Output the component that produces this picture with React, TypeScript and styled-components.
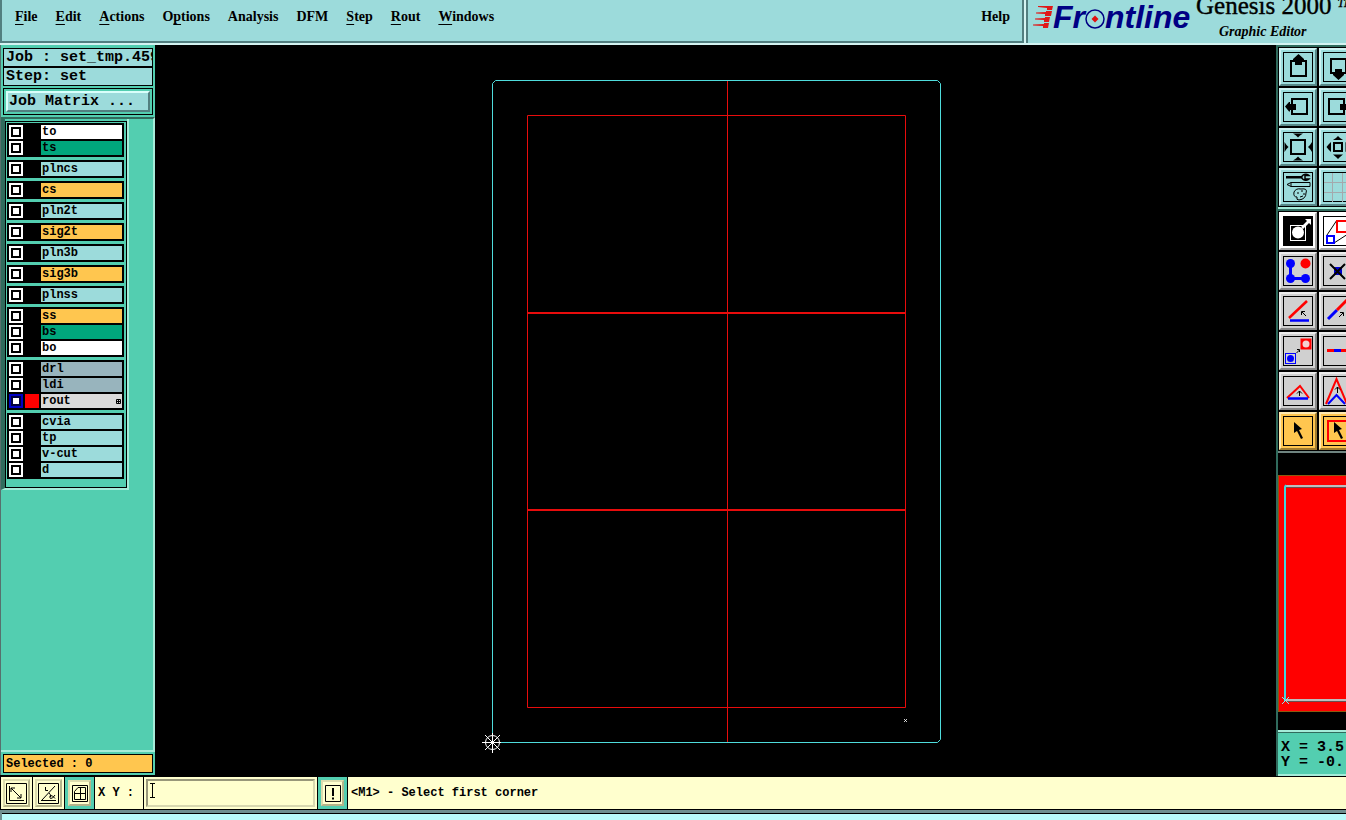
import React from "react";
import styled, { createGlobalStyle } from "styled-components";

const c = {
  aqua: "#9cdbdb",
  aquaLight: "#d4f4f2",
  aquaDark: "#527f80",
  green: "#53ceb0",
  greenLight: "#a5ecd9",
  greenDark: "#306b5d",
  orange: "#ffc64f",
  cream: "#ffffce",
  creamDark: "#98977a",
};
const mono = `"Liberation Mono", "DejaVu Sans Mono", monospace`;
const serif = `"Liberation Serif", "Times New Roman", serif`;

const GlobalStyle = createGlobalStyle`
  * { box-sizing: border-box; }
  body { margin: 0; background: #000; color: #000; overflow: hidden; }
  button, input { font: inherit; color: inherit; margin: 0; }
`;

const Shell = styled.div`
  display: flex;
  flex-direction: column;
  height: 100vh;
  min-height: 640px;
  font: bold 12px/16px ${mono};
`;

/* ---------- top bar ---------- */
const TopBar = styled.header`
  display: flex;
  flex: none;
  height: 45px;
  background: ${c.aqua};
  border-bottom: 2px solid ${c.aquaLight};
`;
const MenuBar = styled.nav`
  display: flex;
  flex: 1;
  gap: 18px;
  align-items: flex-start;
  padding: 9px 12px 0 13px;
  border: solid ${c.aquaDark};
  border-width: 0 2px 2px;
  font: bold 14px/16px ${serif};
`;
const MenuButton = styled.button<{ $end?: boolean }>`
  padding: 0;
  border: 0;
  background: none;
  margin-left: ${(p) => (p.$end ? "auto" : "0")};
`;
const Mnemonic = styled.span`
  text-decoration: underline;
  text-decoration-thickness: 1px;
  text-underline-offset: 3px;
`;
const Brand = styled.div`
  display: flex;
  flex: none;
  width: 322px;
  padding-left: 7px;
  border-left: 2px solid ${c.aquaLight};
  box-shadow: inset 2px 0 0 ${c.aquaDark};
  overflow: hidden;
`;
const Logo = styled.div`
  display: flex;
  align-items: center;
  flex: none;
  width: 163px;
  height: 34px;
  color: #000084;
  font: italic bold 32px/34px "Liberation Sans", Arial, sans-serif;
`;
const Product = styled.div`
  width: 160px;
  flex: none;
`;
const ProductName = styled.div`
  margin-bottom: 12px;
  font: 25px/11px ${serif};
  -webkit-text-stroke: 0.4px #000;
  white-space: nowrap;
`;
const Trade = styled.span`
  margin-left: 6px;
  vertical-align: 7px;
  font: italic 12px/2px ${serif};
`;
const ProductSub = styled.div`
  padding-left: 23px;
  font: italic bold 14px/17px ${serif};
`;

/* ---------- main ---------- */
const Main = styled.main`
  display: flex;
  flex: 1;
  min-height: 0;
`;
const Side = styled.aside`
  display: flex;
  flex-direction: column;
  flex: none;
  width: 155px;
  margin-bottom: 1px;
  background: ${c.green};
  border-left: 1px solid #57706d;
`;
const JobBlock = styled.div`
  padding: 3px 2px 2px;
`;
const JobLine = styled.div`
  height: 19px;
  padding-left: 2px;
  border: 1px solid #000;
  background: ${c.aqua};
  font: bold 15px/18px ${mono};
  white-space: pre;
  overflow: hidden;
`;
const MatrixFrame = styled.div`
  display: flex;
  margin-top: 2px;
  padding: 2px;
  border: 1px solid #000;
`;
const MatrixButton = styled.button`
  flex: 1;
  height: 21px;
  padding: 0 1px;
  border: 2px solid;
  border-color: #d9fffb #527f80 #527f80 #d9fffb;
  background: ${c.aqua};
  font: bold 15px/18px ${mono};
  text-align: left;
`;
const LayerPane = styled.div`
  flex: 1;
  min-height: 0;
  border: solid ${c.greenLight};
  border-width: 2px 2px 2px 0;
  border-top-color: ${c.greenDark};
`;
const LayerWell = styled.div`
  width: 128px;
  padding-top: 2px;
  border: solid ${c.greenLight};
  border-width: 0 2px 2px 4px;
  border-left-color: ${c.greenDark};
`;
const LayerList = styled.div`
  display: flex;
  flex-direction: column;
  gap: 3px;
  padding: 1px 2px 8px 1px;
  border: 1px solid #000;
`;
const LayerGroup = styled.div`
  display: flex;
  flex-direction: column;
  gap: 2px;
  padding: 2px;
  background: #000;
`;
const LayerRow = styled.label`
  display: flex;
  gap: 2px;
  height: 14px;
`;
const LayerCheck = styled.input`
  appearance: none;
  flex: none;
  width: 14px;
  height: 14px;
  border: 2px solid #fff;
  background: #fff;
  box-shadow: inset 0 0 0 2px #000;
  &:checked {
    border-color: #0000c4;
    box-shadow: inset 0 0 0 2px #00003c;
  }
`;
const Swatch = styled.span<{ $on?: boolean }>`
  flex: none;
  width: 14px;
  background: ${(p) => (p.$on ? "#f00" : "#000")};
`;
const LayerName = styled.span<{ $bg: string }>`
  display: flex;
  align-items: center;
  justify-content: space-between;
  flex: 1;
  padding: 0 1px;
  background: ${(p) => p.$bg};
  font: bold 12px/14px ${mono};
`;
const SelectedBox = styled.div`
  height: 19px;
  margin: 2px;
  padding-left: 2px;
  border: 1px solid #000;
  background: ${c.orange};
  font: bold 12px/18px ${mono};
`;
const Canvas = styled.section`
  display: flex;
  flex: 1;
  min-width: 0;
  background: #000;
`;
const Drawing = styled.svg`
  flex: 1;
  min-width: 0;
  height: 100%;
`;

/* ---------- tools ---------- */
const Tools = styled.aside`
  display: flex;
  flex-direction: column;
  flex: none;
  width: 70px;
  background: #000;
  border-left: 2px solid ${c.greenDark};
  overflow: hidden;
`;
const ToolGrid = styled.div<{ $edge: string }>`
  display: grid;
  grid-template-columns: 38px 38px;
  gap: 2px;
  flex: none;
  width: 80px;
  padding: 1px;
  border: solid ${(p) => p.$edge};
  border-width: 2px 0;
  border-top-color: ${c.greenDark};
`;
type Tone = "aqua" | "gray" | "white" | "orange";
const tones: Record<Tone, [string, string, string]> = {
  aqua: [c.aqua, "#cff3f3", "#588888"],
  gray: ["#d0d0d0", "#ececec", "#878787"],
  white: ["#ffffff", "#ffffff", "#a8a8a8"],
  orange: [c.orange, "#ffe9b0", "#a07c30"],
};
const ToolButton = styled.button<{ $tone: Tone }>`
  width: 38px;
  height: 38px;
  padding: 0;
  border: 2px solid;
  border-color: ${(p) => {
    const [, hi, lo] = tones[p.$tone];
    return `${hi} ${lo} ${lo} ${hi}`;
  }};
  background: ${(p) => tones[p.$tone][0]};
  svg { display: block; }
`;
const MiniMap = styled.div`
  display: flex;
  align-items: center;
  flex: 1;
  min-height: 0;
  padding-top: 3px;
`;
const Coords = styled.div`
  flex: none;
  height: 46px;
  padding: 8px 0 0 3px;
  border: solid ${c.greenLight};
  border-width: 2px 0;
  background: ${c.green};
  box-shadow: inset 0 1px 0 ${c.greenDark};
  font: bold 15px/15px ${mono};
  white-space: pre;
`;

/* ---------- bottom bar ---------- */
const BottomBar = styled.footer`
  display: flex;
  flex: none;
  height: 34px;
  background: ${c.cream};
  border: solid #000;
  border-width: 1px 0 1px 1px;
`;
const ModeCell = styled.div<{ $on?: boolean }>`
  display: flex;
  flex: none;
  width: ${(p) => (p.$on ? "30px" : "32px")};
  padding: ${(p) => (p.$on ? "3px" : "2px")};
  background: ${(p) => (p.$on ? c.green : c.cream)};
  border-right: 1px solid #000;
`;
const ModeButton = styled.button`
  display: flex;
  align-items: center;
  justify-content: center;
  flex: 1;
  padding: 0;
  border: 2px solid;
  border-color: #dcdcae #b4b48a #b4b48a #dcdcae;
  background: ${c.cream};
  svg { flex: none; }
`;
const XYLabel = styled.label`
  flex: none;
  width: 49px;
  padding-left: 3px;
  border-right: 1px solid #000;
  font: bold 12px/33px ${mono};
  white-space: pre;
`;
const XYField = styled.div`
  display: flex;
  align-items: center;
  flex: none;
  width: 174px;
  padding: 2px;
  border-right: 1px solid #000;
`;
const XYInput = styled.input`
  width: 100%;
  height: 28px;
  padding: 0 3px;
  border: 2px solid;
  border-color: ${c.creamDark} #d8d8b0 #d8d8b0 ${c.creamDark};
  background: ${c.cream};
  outline: none;
`;
const Message = styled.output`
  padding-left: 3px;
  font: bold 12px/33px ${mono};
`;
const Caret = styled.svg`
  position: absolute;
  left: 4px;
  top: 4px;
  pointer-events: none;
`;
const InputWrap = styled.div`
  position: relative;
  display: flex;
  flex: 1;
`;
const Strip = styled.div`
  flex: none;
  height: 10px;
  border-top: 3px solid #6f8f90;
  border-left: 2px solid #6f8f90;
  background: #b9fbfb;
  box-shadow: inset 0 1px 0 #000;
`;

const menus: [string, string, string][] = [
  ["", "F", "ile"],
  ["", "E", "dit"],
  ["", "A", "ctions"],
  ["O", "p", "tions"],
  ["Analysis", "", ""],
  ["DFM", "", ""],
  ["", "S", "tep"],
  ["", "R", "out"],
  ["", "W", "indows"],
];

const WHITE = "#ffffff";
const MASK = "#00a67c";
const SLATE = "#98b4bd";
const layers: [string, string][][] = [
  [["to", WHITE], ["ts", MASK]],
  [["plncs", c.aqua]],
  [["cs", c.orange]],
  [["pln2t", c.aqua]],
  [["sig2t", c.orange]],
  [["pln3b", c.aqua]],
  [["sig3b", c.orange]],
  [["plnss", c.aqua]],
  [["ss", c.orange], ["bs", MASK], ["bo", WHITE]],
  [["drl", SLATE], ["ldi", SLATE], ["rout", "#dadada"]],
  [["cvia", c.aqua], ["tp", c.aqua], ["v-cut", c.aqua], ["d", c.aqua]],
];

const cursor = "M15 10 L23 17 L20 18 L24 26 L22 27 L18 19 L15 21 Z";
const box = { fill: "none", stroke: "#000", strokeWidth: 2 };

const viewTools: [string, React.ReactNode][] = [
  ["Pan up", <><rect x="12" y="13" width="15" height="15" {...box} /><path d="M19.5 6 L25 11 V12 H23 V17 H16 V12 H14 V11Z" /></>],
  ["Pan down", <><rect x="12" y="11" width="15" height="14" {...box} /><path d="M16 21 H23 V25 H25 V27 L19.5 32 L14 27 V25 H16Z" /></>],
  ["Pan left", <><rect x="13" y="11" width="15" height="15" {...box} /><path d="M6 18.5 L10 14 H11 V16 H17 V22 H11 V23.5 H10Z" /></>],
  ["Pan right", <><rect x="10" y="11" width="15" height="15" {...box} /><path d="M32 18.5 L28 14 H27 V16 H21 V22 H27 V23.5 H28Z" /></>],
  ["Zoom in", <><rect x="12" y="12" width="14" height="14" {...box} /><path d="M14 5.5 H24 L21 7.500 L19 9.500 L17 7.500Z M14 32.500 H24 L21 30.500 L19 28.500 L17 30.500Z M5.500 14 L7.500 17 L9.500 19 L7.500 21 L5.500 24Z M33 14 L31 17 L29 19 L31 21 L33 24Z" /></>],
  ["Zoom out", <><rect x="15" y="15" width="8" height="8" {...box} /><path d="M19 8 L21 10 L24 12 H14 L17 10Z M19 31 L21 29 L24 26.500 H14 L17 29Z M7.500 19 L9.500 16.500 L12 14 V24 L9.500 21.500Z M31 19 L29 16.500 L26.500 14 V24 L29 21.500Z" /></>],
  ["Setup", <>
    <path d="M7 8 H23 V10.5 H7Z" />
    <path d="M30 7.5 A4 3 0 1 0 30 11 H26 V7.5Z" fill="none" stroke="#000" strokeWidth="1.5" />
    <path d="M8 16.5 L12 14.5 H31 V18.5 H12Z M12 14.5 V18.5" fill="none" stroke="#000" />
    <path d="M15 24 Q17 20 22 21 Q29 20 27 25 Q27 31 20 32 Q17 32 18 29 Q14 29 15 24Z" fill="none" stroke="#000" />
    <path d="M18 25 h2 m2 -2 h2 m0 3 h2 m-5 3 l3 -1" stroke="#000" />
  </>],
  ["Grid", <path d="M13.5 5 V34 M23.5 5 V34 M5 14.5 H34 M5 24.5 H34" stroke="#a3a9ad" fill="none" />],
];

const editTools: [string, Tone, React.ReactNode][] = [
  ["Change feature", "white", <>
    <rect x="4" y="4" width="30" height="30" />
    <rect x="11.5" y="13.5" width="15" height="15" fill="none" stroke="#fff" />
    <circle cx="19" cy="20.5" r="6" fill="#fff" />
    <path d="M22 15 L28 9 L26 7 H32 V13 L30 11 L24 17Z" fill="#fff" />
  </>],
  ["Copy to layer", "white", <>
    <path d="M8 23 L18 8 M15 31 L29 22" stroke="#000" fill="none" />
    <rect x="8" y="24" width="7" height="7" fill="none" stroke="#00f" strokeWidth="2" />
    <rect x="18" y="9" width="13" height="11" fill="#fff" stroke="#f00" strokeWidth="2" />
  </>],
  ["Connect points", "gray", <>
    <path d="M11.5 11 V26.5 H27" stroke="#00f" strokeWidth="3" fill="none" />
    <g fill="#00f"><circle cx="11.5" cy="11.5" r="4.5" /><circle cx="11.5" cy="26.5" r="4.5" /><circle cx="26.5" cy="26.5" r="4.5" /></g>
    <circle cx="26.5" cy="11.5" r="5" fill="#f00" />
  </>],
  ["Delete", "gray", <><rect x="15" y="15" width="8" height="8" fill="#0000d0" /><path d="M11 12 L26 27 M26 12 L11 27" stroke="#000" strokeWidth="2" /></>],
  ["Change angle", "gray", <>
    <path d="M10 26 L28 9" stroke="#f00" strokeWidth="2.5" /><path d="M11 28.5 H30" stroke="#00f" strokeWidth="2.5" />
    <path d="M27 24 L23 20 M22.5 23 V19.5 H26" stroke="#000" fill="none" />
  </>],
  ["Extend line", "gray", <>
    <path d="M9 27 L18 18" stroke="#00f" strokeWidth="3" /><path d="M18 18 L28 8" stroke="#f00" strokeWidth="3" />
    <path d="M20 25 L24 21 M21 20.5 H24.5 V24" stroke="#000" fill="none" />
  </>],
  ["Move feature", "gray", <>
    <rect x="22" y="7" width="10" height="10" fill="#f00" stroke="#f00" /><circle cx="27" cy="12" r="3.5" fill="#f4d0d0" />
    <rect x="6.5" y="21.5" width="10" height="10" fill="none" stroke="#00f" /><circle cx="11.5" cy="26.5" r="3.5" fill="#00f" />
    <path d="M17.5 21 L20.5 18 M18 17.5 H20.5 V20" stroke="#000" fill="none" />
  </>],
  ["Break line", "gray", <><path d="M8 18.5 H32" stroke="#f00" strokeWidth="3" /><path d="M15 18.5 H22" stroke="#00f" strokeWidth="3" /></>],
  ["Move vertex", "gray", <>
    <path d="M8 26 L21 14 L30 26" stroke="#f00" strokeWidth="2" fill="none" /><path d="M9 26.5 H29" stroke="#00f" strokeWidth="2.5" />
    <path d="M20.5 24 V19 M18 21.5 L20.5 19 L23 21.5" stroke="#000" fill="none" />
  </>],
  ["Stretch vertex", "gray", <>
    <path d="M7 32 L17.5 7 L28 32" stroke="#f00" strokeWidth="2" fill="none" /><path d="M9 32 L17.5 23 L26 32" stroke="#00f" strokeWidth="2" fill="none" />
    <path d="M18.5 21 V15 M16 17.5 L18.5 15 L21 17.5" stroke="#000" fill="none" />
  </>],
  ["Select", "orange", <path d={cursor} />],
  ["Select area", "orange", <><rect x="9" y="9" width="23" height="20" fill="none" stroke="#f00" strokeWidth="2" /><path d={cursor} /></>],
];

const ToolIcon = ({ children }: { children: React.ReactNode }) => (
  <svg width="34" height="34" viewBox="2 2 34 34" aria-hidden="true">
    <rect x="4.5" y="4.5" width="29" height="29" fill="none" stroke="#000" />
    {children}
  </svg>
);

export default function App() {
  return (
    <Shell>
      <GlobalStyle />
      <TopBar>
        <MenuBar>
          {menus.map(([a, m, b]) => (
            <MenuButton key={a + m + b}>{a}{m && <Mnemonic>{m}</Mnemonic>}{b}</MenuButton>
          ))}
          <MenuButton $end>Help</MenuButton>
        </MenuBar>
        <Brand>
          <Logo>
            <svg width="20" height="24" viewBox="0 0 20 24" aria-hidden="true" fill="#e01818">
              <path d="M5 1 H20 L19 5 H14 V3 L5 2Z M3 7.500 L13 7 V6 H19 L18 11 H12 V9 L3 8.500Z M2 13.500 L12 13 V12 H17 L16 17 H11 V15 L2 14.500Z M0 19.500 L11 19 V18 H16 L15 23 H10 V21 L0 20.500Z" />
            </svg>
            <span>Fr</span>
            <svg width="20" height="24" viewBox="0 0 20 24" aria-hidden="true">
              <circle cx="10" cy="14" r="9" fill="none" stroke="#000084" strokeWidth="1.5" />
              <path d="M10 10.500 L13.500 14 L10 17.500 L6.500 14Z" fill="#e01010" />
            </svg>
            <span>ntline</span>
          </Logo>
          <Product>
            <ProductName>Genesis 2000<Trade>TM</Trade></ProductName>
            <ProductSub>Graphic Editor</ProductSub>
          </Product>
        </Brand>
      </TopBar>

      <Main>
        <Side>
          <JobBlock>
            <JobLine>Job : set_tmp.459</JobLine>
            <JobLine>Step: set</JobLine>
            <MatrixFrame><MatrixButton>Job Matrix ...</MatrixButton></MatrixFrame>
          </JobBlock>
          <LayerPane>
            <LayerWell>
              <LayerList>
                {layers.map((group) => (
                  <LayerGroup key={group[0][0]}>
                    {group.map(([name, bg]) => {
                      const on = name === "rout";
                      return (
                        <LayerRow key={name}>
                          <LayerCheck type="checkbox" defaultChecked={on} />
                          <Swatch $on={on} />
                          <LayerName $bg={bg}>
                            {name}
                            {on && (
                              <svg width="5" height="5" viewBox="0 0 5 5" aria-hidden="true">
                                <path d="M.5 .5 H4.5 V4.5 H.5Z M2.5 0 V5 M0 2.5 H5" fill="none" stroke="#000" />
                              </svg>
                            )}
                          </LayerName>
                        </LayerRow>
                      );
                    })}
                  </LayerGroup>
                ))}
              </LayerList>
            </LayerWell>
          </LayerPane>
          <SelectedBox>Selected : 0</SelectedBox>
        </Side>

        <Canvas>
          <Drawing viewBox="155 45 1121 731" role="img" aria-label="Panel outline" fill="none">
            <g stroke="#e80c0c">
              <path d="M527.5 115.5 H905.5 V707.5 H527.5Z M727.5 81 V742" />
              <path d="M527 313 H906 M527 510 H906" strokeWidth="2" />
            </g>
            <path d="M495.5 80.5 H937.5 L940.5 83.5 V739.5 L937.5 742.5 H492.5 V83.5Z" stroke="#4fdcdc" />
            <g stroke="#fff">
              <circle cx="492.5" cy="742.5" r="7" />
              <path d="M482 742.5 H501 M492.5 733 V753 M485 735 L500 750 M500 735 L485 750" />
              <rect x="491.5" y="741.5" width="2" height="2" />
              <path d="M904 719 L907 722 M907 719 L904 722" strokeWidth=".8" />
            </g>
          </Drawing>
        </Canvas>

        <Tools>
          <ToolGrid $edge={c.greenLight}>
            {viewTools.map(([name, icon]) => (
              <ToolButton key={name} $tone="aqua" aria-label={name}><ToolIcon>{icon}</ToolIcon></ToolButton>
            ))}
          </ToolGrid>
          <ToolGrid $edge="#6f8480">
            {editTools.map(([name, tone, icon]) => (
              <ToolButton key={name} $tone={tone} aria-label={name}><ToolIcon>{icon}</ToolIcon></ToolButton>
            ))}
          </ToolGrid>
          <MiniMap>
            <svg width="68" height="237" viewBox="0 0 68 237" role="img" aria-label="Overview">
              <rect width="80" height="237" fill="#8a5a10" />
              <rect x="1" y="1" width="80" height="235" fill="#f00" />
              <path d="M8 11 H68 M8 225 H68" stroke="#bdbdbd" strokeWidth="2" />
              <path d="M8 12.5 H68 M8 226.5 H68" stroke="#6a5050" />
              <path d="M8 10 L7 12 V226" stroke="#40d8e0" strokeWidth="2" fill="none" />
              <path d="M4 222 L11 229 M11 222 L4 229" stroke="#8fe8e8" />
            </svg>
          </MiniMap>
          <Coords>{"X = 3.5\nY = -0."}</Coords>
        </Tools>
      </Main>

      <BottomBar>
        <ModeCell>
          <ModeButton aria-label="Absolute mode">
            <svg width="21" height="21" viewBox="0 0 21 21" fill="none" stroke="#000" aria-hidden="true">
              <path d="M.5 .5 H20.5 V20.5 H.5Z M3.5 3 V17.5 H18 M5 5 L15 15 M5 9 V5 H9 M15 11 V15 H11" />
            </svg>
          </ModeButton>
        </ModeCell>
        <ModeCell>
          <ModeButton aria-label="Angle mode">
            <svg width="21" height="21" viewBox="0 0 21 21" fill="none" stroke="#000" aria-hidden="true">
              <path d="M.5 .5 H20.5 V20.5 H.5Z M3 17.5 H18 M4 17 L17 3 M7.5 4 V7.5 H10 M11 10 Q13 11.500 12.500 14 M17 12 Q14.500 16 12.500 15.500 Q11 14 12.500 12.500 Q14.500 12 17 15.500" />
            </svg>
          </ModeButton>
        </ModeCell>
        <ModeCell $on>
          <ModeButton aria-label="Snap mode">
            <svg width="16" height="17" viewBox="0 0 16 17" fill="none" stroke="#000" aria-hidden="true">
              <path d="M.5 .5 H15.5 V16.5 H.5Z M2.500 8.5 H13.500 M8.5 2.500 V14.500 M2.500 14.5 V6.500 L6 2.5 H13.5 V14.5Z" />
            </svg>
          </ModeButton>
        </ModeCell>
        <XYLabel htmlFor="xy">X Y :</XYLabel>
        <XYField>
          <InputWrap>
            <XYInput id="xy" type="text" />
            <Caret width="5" height="15" viewBox="0 0 5 15" fill="none" stroke="#000" aria-hidden="true">
              <path d="M0 .5 H5 M0 14.5 H5 M2.5 0 V15" />
            </Caret>
          </InputWrap>
        </XYField>
        <ModeCell $on>
          <ModeButton aria-label="Alert">
            <svg width="16" height="17" viewBox="0 0 16 17" fill="none" stroke="#000" aria-hidden="true">
              <path d="M.5 .5 H15.5 V16.5 H.5Z" /><path d="M8 3 V11 M8 12.5 V14.5" strokeWidth="2" />
            </svg>
          </ModeButton>
        </ModeCell>
        <Message>&lt;M1&gt; - Select first corner</Message>
      </BottomBar>
      <Strip />
    </Shell>
  );
}
